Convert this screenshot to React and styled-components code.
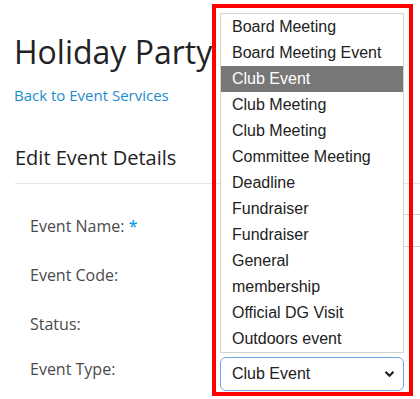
import styled, { createGlobalStyle } from "styled-components";

const GlobalStyle = createGlobalStyle`
  body {
    margin: 0;
    background: #fff;
    font-family: "Open Sans", "Liberation Sans", sans-serif;
  }
`;

const eventTypes = [
  "Board Meeting",
  "Board Meeting Event",
  "Club Event",
  "Club Meeting",
  "Club Meeting",
  "Committee Meeting",
  "Deadline",
  "Fundraiser",
  "Fundraiser",
  "General",
  "membership",
  "Official DG Visit",
  "Outdoors event",
];

function App() {
  const selected = 2;

  return (
    <Page>
      <GlobalStyle />
      <Title>Holiday Party</Title>
      <BackLink href="#">Back to Event Services</BackLink>

      <SectionTitle>Edit Event Details</SectionTitle>

      <Form>
        <Row $height={33}>
          <Label>
            Event Name: <Required>*</Required>
          </Label>
          <Input $width={260} />
        </Row>
        <Row $height={33}>
          <Label>Event Code:</Label>
          <Input $width={160} />
        </Row>
        <Row $height={29}>
          <Label>Status:</Label>
        </Row>
        <Row $height={34}>
          <Label>Event Type:</Label>
          <Select>
            <span>Club Event</span>
            <svg width="11" height="8" viewBox="0 0 11 8">
              <path
                d="M1.5 1.8 L5.5 5.8 L9.5 1.8"
                fill="none"
                stroke="#222"
                strokeWidth="2.2"
              />
            </svg>
          </Select>
        </Row>
      </Form>

      <ListBox>
        {eventTypes.map((name, i) => (
          <Option key={i} $active={i === selected}>
            {name}
          </Option>
        ))}
      </ListBox>

      <Highlight />
    </Page>
  );
}

export default App;

const Page = styled.div`
  position: relative;
  width: 420px;
  height: 399px;
  overflow: hidden;
  padding: 33px 0 0 14px;
  box-sizing: border-box;
`;

const Title = styled.h1`
  margin: 0;
  font-size: 32px;
  font-weight: 400;
  line-height: 38px;
  color: #1f2326;
`;

const BackLink = styled.a`
  display: block;
  margin-top: 13px;
  font-size: 15px;
  line-height: 22px;
  color: #1e8ccd;
  text-decoration: none;
`;

const SectionTitle = styled.h2`
  margin: 38px 0 0 1px;
  padding-bottom: 11px;
  font-size: 20px;
  font-weight: 400;
  line-height: 28px;
  color: #222;
  border-bottom: 1px solid #e3e3e3;
`;

const Form = styled.div`
  display: flex;
  flex-direction: column;
  gap: 16px;
  margin-top: 30px;
  padding-left: 16px;
`;

const Row = styled.div`
  display: flex;
  align-items: flex-start;
  height: ${(p) => p.$height}px;
`;

const Label = styled.div`
  width: 190px;
  flex-shrink: 0;
  font-size: 16px;
  line-height: 24px;
  color: #4a4a4a;
`;

const Required = styled.span`
  color: #1a9be8;
  font-weight: 600;
`;

const Input = styled.div`
  width: ${(p) => p.$width}px;
  height: 33px;
  flex-shrink: 0;
  box-sizing: border-box;
  border: 1px solid #cfcfcf;
`;

const Select = styled.div`
  width: 184px;
  height: 34px;
  flex-shrink: 0;
  box-sizing: border-box;
  display: flex;
  align-items: center;
  justify-content: space-between;
  padding: 0 8px 0 11px;
  border: 1px solid #78a4e6;
  border-radius: 6px;
  font-family: "Liberation Sans", Arial, sans-serif;
  font-size: 16px;
  color: #222;
`;

const ListBox = styled.div`
  position: absolute;
  left: 220px;
  top: 13px;
  width: 184px;
  box-sizing: border-box;
  border: 1px solid #d2d2d2;
  background: #fff;
`;

const Option = styled.div`
  height: 26px;
  line-height: 26px;
  padding-left: 11px;
  font-family: "Liberation Sans", Arial, sans-serif;
  font-size: 16px;
  white-space: nowrap;
  color: ${(p) => (p.$active ? "#fff" : "#222")};
  background: ${(p) => (p.$active ? "#777" : "transparent")};
`;

const Highlight = styled.div`
  position: absolute;
  left: 212px;
  top: 4px;
  width: 201px;
  height: 392px;
  box-sizing: border-box;
  border: 4px solid #f00;
  pointer-events: none;
`;
